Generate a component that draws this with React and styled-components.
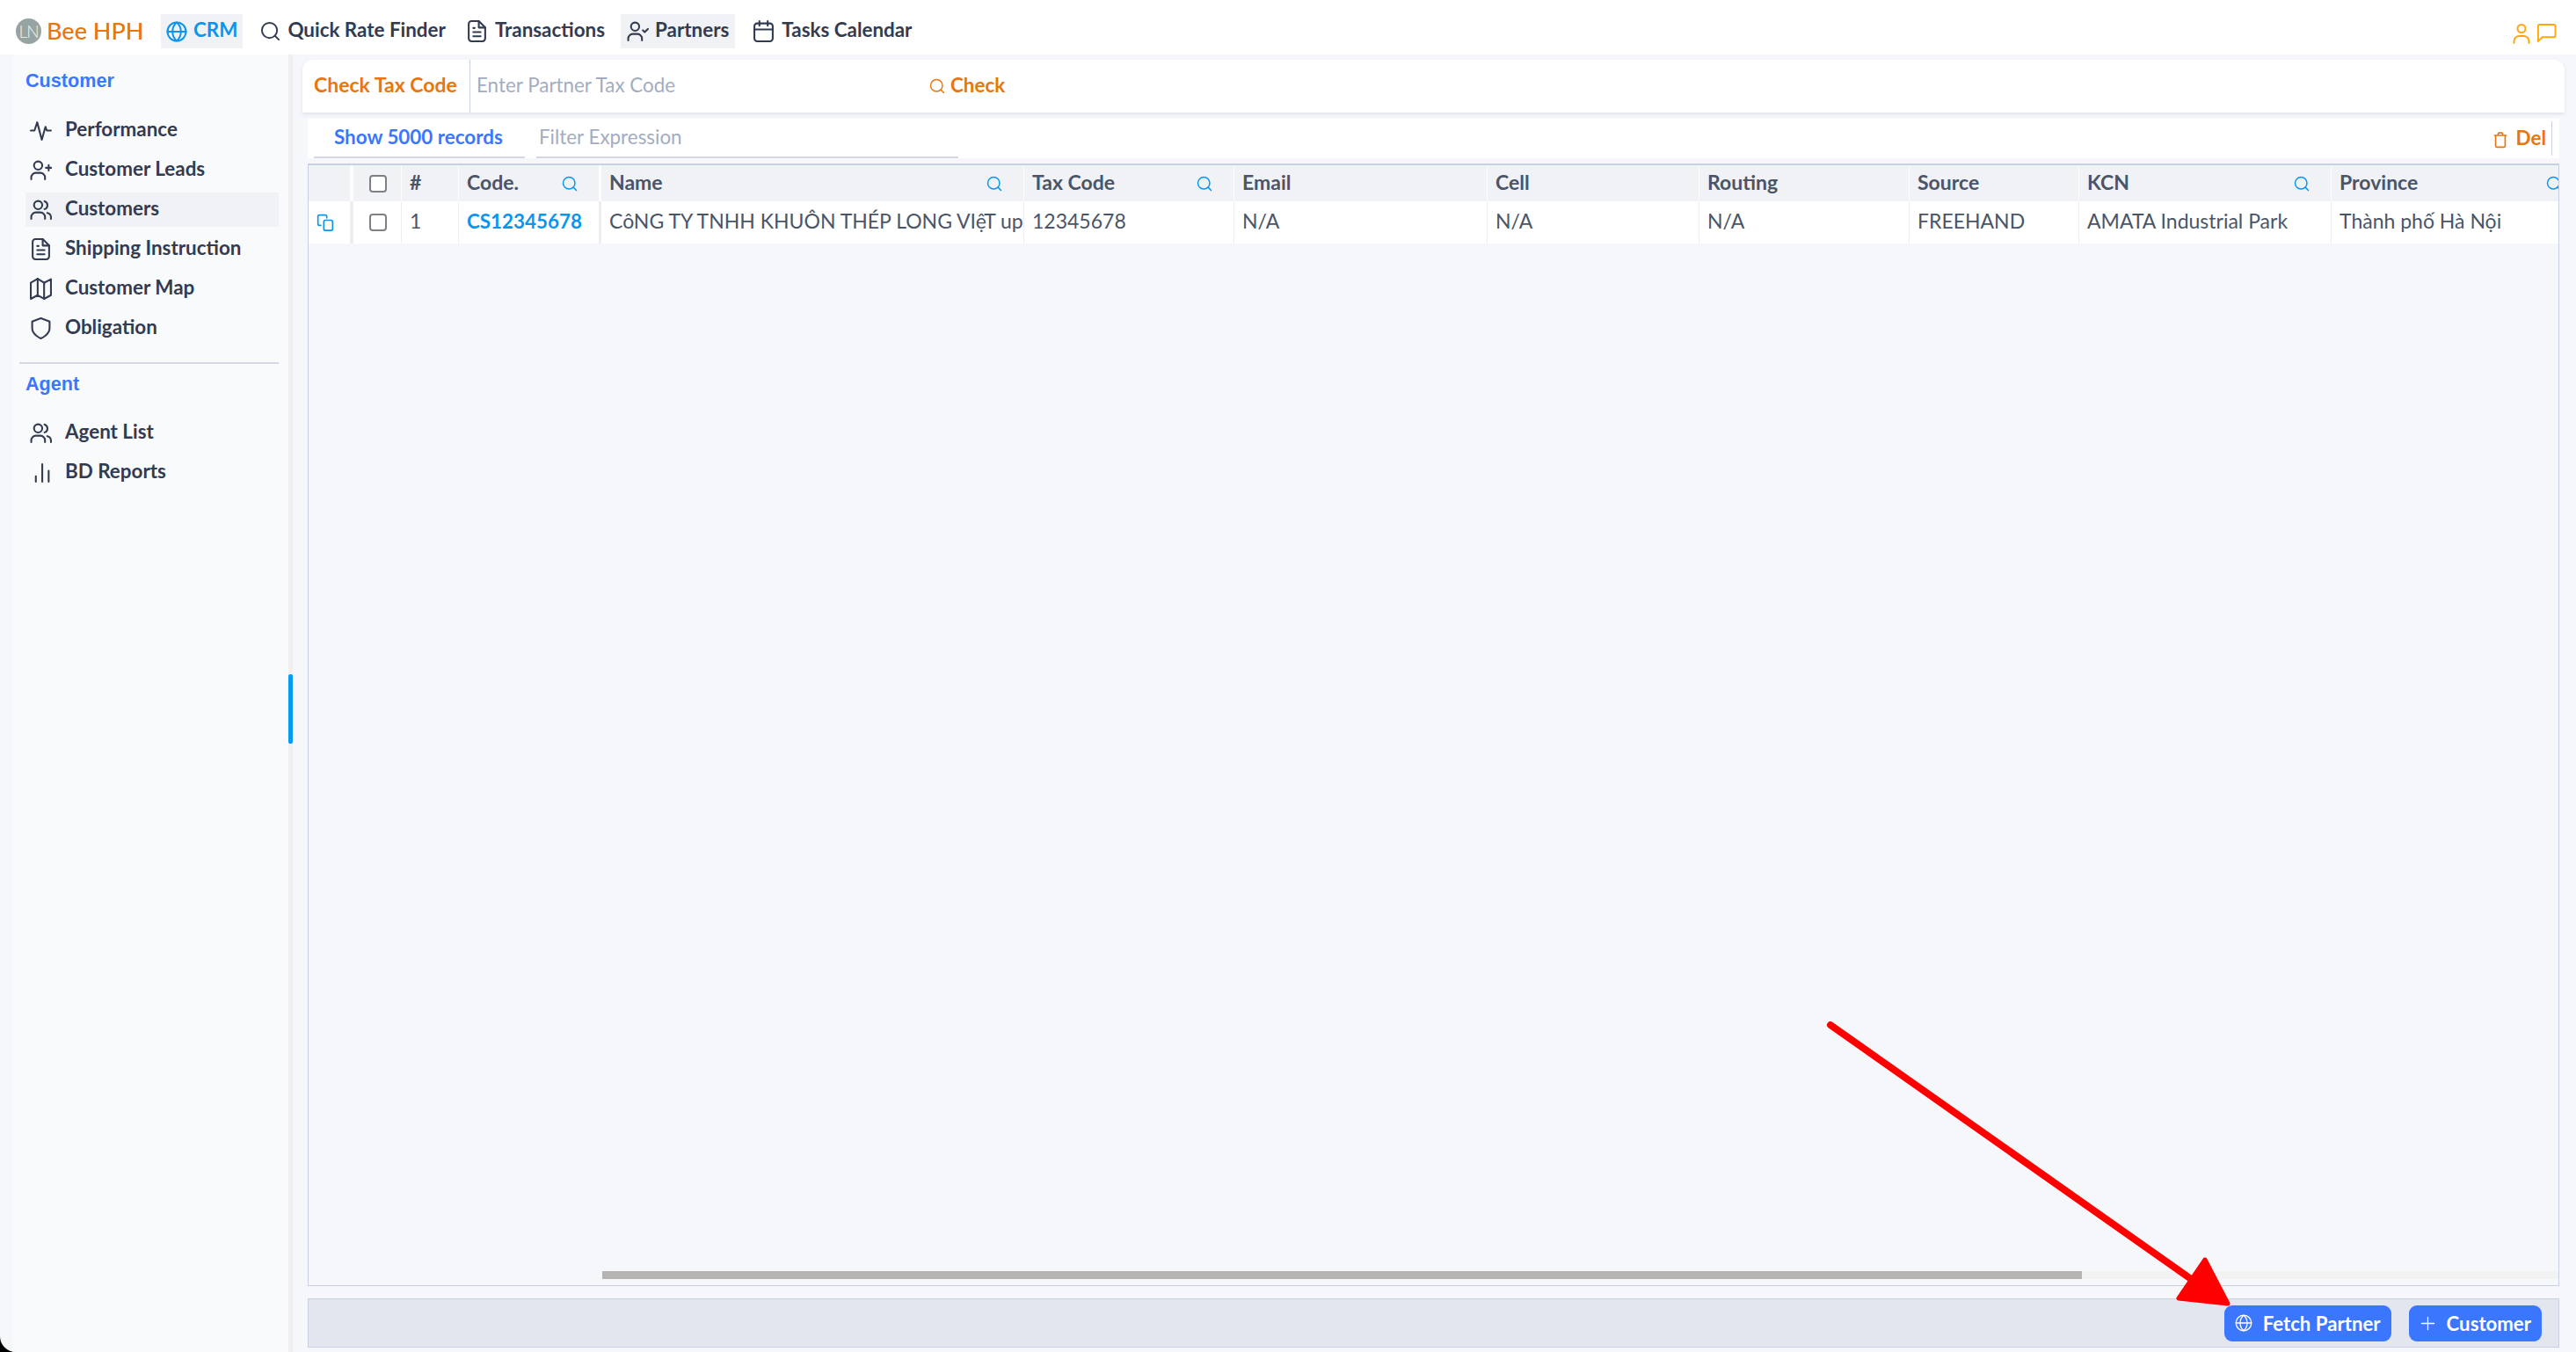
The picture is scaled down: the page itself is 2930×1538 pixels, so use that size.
import React from "react";
import styled, { createGlobalStyle } from "styled-components";

const FONT = `"Lato", "Noto Sans", "Liberation Sans", sans-serif`;
const LINE = "#c9d0e0";
const INK = "#323b50";
const CELL_INK = "#4a5568";
const ORANGE = "#e8760c";
const SKY = "#0a95ee";
const BLUE = "#3b76ff";

const Global = createGlobalStyle`
  html, body { margin: 0; padding: 0; height: 100%; background: #000; }
  * { box-sizing: border-box; }
  #root { height: 100%; }
`;

const Page = styled.div`
  position: relative;
  width: 100%;
  height: 100vh;
  display: flex;
  flex-direction: column;
  overflow: hidden;
  background: #f5f7fb;
  border-bottom-left-radius: 18px;
  font-family: ${FONT};
  font-size: 22.4px;
  color: ${INK};
`;
const Label = styled.span`
  padding-bottom: 4px;
`;

const TopBar = styled.header`
  flex: 0 0 62px;
  display: flex;
  align-items: center;
  padding: 9px 22px 0 18px;
  background: #fff;
`;
const Avatar = styled.div`
  width: 29px;
  height: 29px;
  border-radius: 50%;
  background: #96a3a3;
  color: #eef2f2;
  font-size: 19px;
  font-weight: 300;
  letter-spacing: -1px;
  display: flex;
  align-items: center;
  justify-content: center;
  margin-right: 6px;
`;
const Brand = styled.div`
  font-size: 27px;
  font-weight: 500;
  color: ${ORANGE};
  width: 130px;
  padding-bottom: 3px;
`;
const NavList = styled.nav`
  display: flex;
  align-items: center;
  flex: 1;
`;
const NavItem = styled.a`
  display: flex;
  align-items: center;
  height: 39px;
  gap: ${(p) => p.$gap || 8}px;
  padding: 0 ${(p) => (p.$px === undefined ? 7 : p.$px)}px;
  margin-right: ${(p) => p.$mr || 0}px;
  font-weight: 700;
  white-space: nowrap;
  background: ${(p) => (p.$active ? "#f0f2f6" : "transparent")};
  color: ${(p) => (p.$sky ? SKY : INK)};
`;
const Tray = styled.div`
  display: flex;
  align-items: center;
  gap: 5px;
  color: #ffa70f;
  padding-top: 4px;
`;

const Body = styled.div`
  flex: 1;
  display: flex;
  min-height: 0;
`;
const SideGutter = styled.div`
  flex: 0 0 14px;
`;
const Sidebar = styled.aside`
  flex: 0 0 314px;
  background: #f9fafc;
  padding: 17px 11px 0 15px;
  display: flex;
  flex-direction: column;
`;
const SectionTitle = styled.div`
  font-family: "Liberation Sans", Arial, sans-serif;
  font-weight: 700;
  font-size: 21.6px;
  line-height: 26px;
  color: ${BLUE};
  margin-bottom: ${(p) => p.$mb}px;
`;
const SideItem = styled.a`
  height: 39px;
  display: flex;
  align-items: center;
  gap: 15px;
  padding-left: 5px;
  margin-bottom: 6px;
  font-weight: 700;
  white-space: nowrap;
  background: ${(p) => (p.$active ? "#f0f2f6" : "transparent")};
`;
const Divider = styled.hr`
  border: 0;
  height: 2px;
  background: #d3d8e4;
  margin: 13px 0 10px -7px;
`;
const Rail = styled.div`
  flex: 0 0 5px;
  background: #f0eeee;
  padding-top: 705px;
`;
const RailThumb = styled.div`
  height: 79px;
  background: #049bf0;
  border-radius: 2px;
`;

const Main = styled.main`
  flex: 1;
  min-width: 0;
  display: flex;
  flex-direction: column;
  padding: 6px 13px 5px 11px;
`;
const TaxCard = styled.section`
  flex: 0 0 60px;
  display: flex;
  align-items: center;
  background: #fff;
  border-radius: 12px 12px 0 0;
  box-shadow: 0 2px 4px rgba(70, 80, 110, 0.12);
`;
const TaxLabel = styled.div`
  width: 191px;
  height: 100%;
  padding-left: 13px;
  display: flex;
  align-items: center;
  font-size: 23px;
  font-weight: 700;
  color: ${ORANGE};
  border-right: 1px solid ${LINE};
`;
const Placeholder = styled.div`
  width: ${(p) => p.$w}px;
  padding: 0 0 4px ${(p) => p.$pl}px;
  color: #a3adbf;
  white-space: nowrap;
`;
const OrangeAction = styled.a`
  display: flex;
  align-items: center;
  gap: ${(p) => p.$gap}px;
  font-weight: 700;
  color: ${ORANGE};
`;
const FilterRow = styled.section`
  flex: 0 0 45px;
  margin: 7px 6px 0;
  display: flex;
  background: #fff;
  padding-left: 7px;
`;
const ShowRecords = styled.a`
  width: 240px;
  padding: 2px 0 0 23px;
  display: flex;
  align-items: center;
  font-weight: 700;
  color: ${BLUE};
  border-bottom: 2px solid #d3d8e4;
`;
const FilterField = styled.div`
  width: 480px;
  margin-left: 13px;
  padding-top: 2px;
  display: flex;
  align-items: center;
  border-bottom: 2px solid #d3d8e4;
`;
const FilterEnd = styled.div`
  margin-left: auto;
  display: flex;
  align-items: center;
  height: 39px;
  align-self: center;
  padding: 2px 6px 0 0;
  margin-right: 8px;
  border-right: 1px solid ${LINE};
`;

const Grid = styled.section`
  flex: 1;
  min-height: 0;
  margin: 6px 6px 0;
  border: 1px solid ${LINE};
  border-top-width: 2px;
  display: flex;
  flex-direction: column;
  overflow: hidden;
`;
const GridRow = styled.div`
  flex: 0 0 ${(p) => p.$h}px;
  display: flex;
  background: ${(p) => p.$bg};
`;
const Cell = styled.div`
  flex: 0 0 ${(p) => p.$w}px;
  display: flex;
  align-items: center;
  padding-left: ${(p) => (p.$pl === undefined ? 9 : p.$pl)}px;
  padding-right: ${(p) => p.$pr || 0}px;
  border-right: ${(p) => p.$sep || 1}px solid ${(p) => p.$line};
  overflow: hidden;
  white-space: nowrap;
  font-size: ${(p) => (p.$link ? 22.4 : 23)}px;
  font-weight: ${(p) => (p.$bold ? 700 : 400)};
  color: ${(p) => (p.$link ? SKY : p.$tint ? SKY : CELL_INK)};
`;
const CellSearch = styled.span`
  margin-left: auto;
  display: flex;
  color: ${SKY};
`;
const Box = styled.span`
  width: 20px;
  height: 20px;
  margin-left: 18px;
  border: 2px solid #7d8087;
  border-radius: 4px;
  background: #fff;
`;
const GridFill = styled.div`
  flex: 1;
`;
const ScrollTrack = styled.div`
  flex: 0 0 9px;
  margin: 0 0 7px 334px;
  background: #f2f2f2;
`;
const ScrollThumb = styled.div`
  width: 1683px;
  height: 100%;
  background: #b6b3b3;
`;

const ActionBar = styled.footer`
  flex: 0 0 56px;
  margin: 14px 6px 0;
  display: flex;
  align-items: center;
  justify-content: flex-end;
  gap: 20px;
  padding-right: 19px;
  background: #e3e6ef;
  border: 1px solid ${LINE};
`;
const PrimaryButton = styled.button`
  height: 41px;
  display: flex;
  align-items: center;
  gap: ${(p) => p.$gap}px;
  padding: 0 12px;
  border: 0;
  border-radius: 9px;
  background: ${BLUE};
  color: #fff;
  font-family: ${FONT};
  font-size: 22.2px;
  font-weight: 700;
  white-space: nowrap;
`;
const ArrowLayer = styled.svg`
  position: absolute;
  inset: 0;
  width: 100%;
  height: 100%;
  pointer-events: none;
`;

const Glyph = ({ size = 25, sw = 2, children }) => (
  <svg
    width={size}
    height={size}
    viewBox="0 0 24 24"
    fill="none"
    stroke="currentColor"
    strokeWidth={sw}
    strokeLinecap="round"
    strokeLinejoin="round"
    style={{ flex: "none" }}
  >
    {children}
  </svg>
);
const Shoulders = "M1.5 22v-2a5 5 0 0 1 5-5h5a5 5 0 0 1 5 5v2";
const IActivity = (p) => <Glyph {...p}><path d="M1 12h4l3-9 5 19 4-14 1.500 4H23" /></Glyph>;
const IUserPlus = (p) => <Glyph {...p}><circle cx="9" cy="7" r="4.5" /><path d={Shoulders} /><path d="M20.500 6.500v6M17.500 9.500h6" /></Glyph>;
const IUsers = (p) => <Glyph {...p}><circle cx="9" cy="7" r="4.5" /><path d={Shoulders} /><path d="M16 2.800a4.500 4.500 0 0 1 0 8.600M19 15.500a5 5 0 0 1 4 5V22" /></Glyph>;
const IUserCheck = (p) => <Glyph {...p}><circle cx="9" cy="7" r="4.5" /><path d={Shoulders} /><path d="M17.500 11l2 2 3.500-3.500" /></Glyph>;
const IUser = (p) => <Glyph {...p}><circle cx="12" cy="6.500" r="4.500" /><path d="M3.500 23v-2a6 6 0 0 1 6-6h5a6 6 0 0 1 6 6v2" /></Glyph>;
const IDoc = (p) => <Glyph {...p}><path d="M14 1H6a3 3 0 0 0-3 3v16a3 3 0 0 0 3 3h12a3 3 0 0 0 3-3V8z" /><path d="M14 1v7h7" /><path d="M8 8.500h1.500M8 13h8M8 17.500h8" /></Glyph>;
const IMap = (p) => <Glyph {...p}><path d="M1 5.500V23l7.500-4 7 4 7.500-4V1.500L15.500 5.500l-7-4.500z" /><path d="M8.500 1v18M15.500 5.500V23" /></Glyph>;
const IShield = (p) => <Glyph {...p}><path d="M12 23s9.500-4 9.500-11V4.500L12 1 2.500 4.500V12c0 7 9.500 11 9.500 11z" /></Glyph>;
const IBars = (p) => <Glyph {...p}><path d="M6.500 22v-6M13.500 22V3M20.500 22V10" /></Glyph>;
const ISearch = (p) => <Glyph {...p}><circle cx="11" cy="11" r="9" /><path d="M17.500 17.500L22 22" /></Glyph>;
const IGlobe = (p) => <Glyph {...p}><circle cx="12" cy="12" r="10.500" /><path d="M1.500 12h21" /><path d="M12 1.500c3.500 3 4.800 6.800 4.800 10.500S15.500 19.500 12 22.500C8.500 19.500 7.200 15.700 7.200 12S8.500 4.500 12 1.500z" /></Glyph>;
const ICalendar = (p) => <Glyph {...p}><rect x="2" y="3.500" width="20" height="19.500" rx="3" /><path d="M2 10h20M7.500 1v5M16.500 1v5" /></Glyph>;
const IChat = (p) => <Glyph {...p}><path d="M22.500 15a2 2 0 0 1-2 2H7l-5 5V4a2 2 0 0 1 2-2h16.500a2 2 0 0 1 2 2z" /></Glyph>;
const ITrash = (p) => <Glyph {...p}><path d="M4 6h16M9 6V3.500a1 1 0 0 1 1-1h4a1 1 0 0 1 1 1V6M5.500 6v14.500A1.500 1.500 0 0 0 7 22h10a1.500 1.500 0 0 0 1.500-1.500V6" /></Glyph>;
const ICopy = (p) => <Glyph {...p}><rect x="10" y="9" width="12" height="14" rx="2" /><path d="M6 16H4a2 2 0 0 1-2-2V4a2 2 0 0 1 2-2h8a2 2 0 0 1 2 2v2" /></Glyph>;
const IPlus = (p) => <Glyph {...p}><path d="M12 3v18M3 12h18" /></Glyph>;

const COLS = [
  { name: "Code.", w: 162, sep: 3, search: true },
  { name: "Name", w: 481, search: true },
  { name: "Tax Code", w: 239, search: true },
  { name: "Email", w: 288 },
  { name: "Cell", w: 241 },
  { name: "Routing", w: 239 },
  { name: "Source", w: 193 },
  { name: "KCN", w: 287, search: true },
  { name: "Province", w: 287, search: true },
];
const ROW = ["CS12345678", "CôNG TY TNHH KHUÔN THÉP LONG VIệT up", "12345678", "N/A", "N/A", "N/A", "FREEHAND", "AMATA Industrial Park", "Thành phố Hà Nội"];

const HEAD_LINE = "#fdfdfe";
const ROW_LINE = "#eceef2";

export default function App() {
  return (
    <Page>
      <Global />
      <TopBar>
        <Avatar>LN</Avatar>
        <Brand>Bee HPH</Brand>
        <NavList>
          <NavItem $active $sky $mr={13} $gap={7} $px={6}><IGlobe size={24} /><Label>CRM</Label></NavItem>
          <NavItem $mr={10}><ISearch size={23} /><Label>Quick Rate Finder</Label></NavItem>
          <NavItem $mr={12} $px={6}><IDoc size={25} /><Label>Transactions</Label></NavItem>
          <NavItem $active $mr={13} $gap={7} $px={7}><IUserCheck size={25} /><Label>Partners</Label></NavItem>
          <NavItem><ICalendar size={25} /><Label>Tasks Calendar</Label></NavItem>
        </NavList>
        <Tray>
          <IUser size={24} />
          <IChat size={23} />
        </Tray>
      </TopBar>
      <Body>
        <SideGutter />
        <Sidebar>
          <SectionTitle $mb={24}>Customer</SectionTitle>
          <SideItem><IActivity /><Label>Performance</Label></SideItem>
          <SideItem><IUserPlus /><Label>Customer Leads</Label></SideItem>
          <SideItem $active><IUsers /><Label>Customers</Label></SideItem>
          <SideItem><IDoc /><Label>Shipping Instruction</Label></SideItem>
          <SideItem><IMap /><Label>Customer Map</Label></SideItem>
          <SideItem><IShield /><Label>Obligation</Label></SideItem>
          <Divider />
          <SectionTitle $mb={23}>Agent</SectionTitle>
          <SideItem><IUsers /><Label>Agent List</Label></SideItem>
          <SideItem><IBars /><Label>BD Reports</Label></SideItem>
        </Sidebar>
        <Rail><RailThumb /></Rail>
        <Main>
          <TaxCard>
            <TaxLabel><Label>Check Tax Code</Label></TaxLabel>
            <Placeholder $w={522} $pl={7}>Enter Partner Tax Code</Placeholder>
            <OrangeAction $gap={6}><ISearch size={18} /><Label>Check</Label></OrangeAction>
          </TaxCard>
          <FilterRow>
            <ShowRecords><Label>Show 5000 records</Label></ShowRecords>
            <FilterField><Placeholder $w={480} $pl={3}>Filter Expression</Placeholder></FilterField>
            <FilterEnd><OrangeAction $gap={8}><ITrash size={20} /><Label>Del</Label></OrangeAction></FilterEnd>
          </FilterRow>
          <Grid>
            <GridRow $h={41} $bg="#f0f2f6">
              <Cell $w={51} $sep={4} $line={HEAD_LINE} />
              <Cell $w={55} $pl={0} $line={HEAD_LINE}><Box /></Cell>
              <Cell $w={65} $line={HEAD_LINE} $bold><Label>#</Label></Cell>
              {COLS.map((c) => (
                <Cell key={c.name} $w={c.w} $sep={c.sep} $pr={24} $line={HEAD_LINE} $bold>
                  <Label>{c.name}</Label>
                  {c.search && <CellSearch><ISearch size={18} /></CellSearch>}
                </Cell>
              ))}
            </GridRow>
            <GridRow $h={48} $bg="#fff">
              <Cell $w={51} $sep={4} $line={ROW_LINE} $tint><ICopy size={20} /></Cell>
              <Cell $w={55} $pl={0} $line={ROW_LINE}><Box /></Cell>
              <Cell $w={65} $line={ROW_LINE}><Label>1</Label></Cell>
              {COLS.map((c, i) => (
                <Cell key={c.name} $w={c.w} $sep={c.sep} $line={ROW_LINE} $bold={i === 0} $link={i === 0}>
                  <Label>{ROW[i]}</Label>
                </Cell>
              ))}
            </GridRow>
            <GridFill />
            <ScrollTrack><ScrollThumb /></ScrollTrack>
          </Grid>
          <ActionBar>
            <PrimaryButton $gap={12}><IGlobe size={20} sw={1.6} />Fetch Partner</PrimaryButton>
            <PrimaryButton $gap={12}><IPlus size={19} sw={1.6} />Customer</PrimaryButton>
          </ActionBar>
        </Main>
      </Body>
      <ArrowLayer viewBox="0 0 2930 1538">
        <path d="M2082 1166L2495 1457" stroke="#ff0000" strokeWidth="8" strokeLinecap="round" fill="none" />
        <path d="M2508 1433L2478 1477L2534 1483Z" fill="#ff0000" stroke="#ff0000" strokeWidth="5" strokeLinejoin="round" />
      </ArrowLayer>
    </Page>
  );
}
